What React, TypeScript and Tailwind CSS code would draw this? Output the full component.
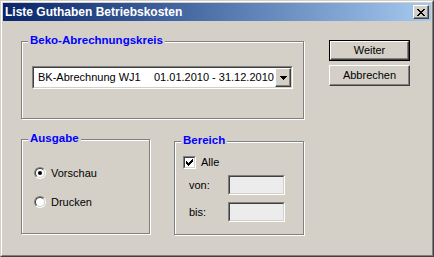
import React from 'react';

const sunken =
  'border border-t-[#808080] border-l-[#808080] border-r-white border-b-white';
const sunkenInner =
  'border border-t-[#404040] border-l-[#404040] border-r-[#d4d0c8] border-b-[#d4d0c8]';
const raised =
  'border border-t-white border-l-white border-r-[#404040] border-b-[#404040] shadow-[inset_-1px_-1px_0_#808080]';

const GroupBox: React.FC<{ label: string; className?: string; children?: React.ReactNode }> = ({
  label,
  className,
  children,
}) => (
  <div
    className={
      'relative border border-[#808080] shadow-[1px_1px_0_#fff,inset_1px_1px_0_#fff] ' + (className ?? '')
    }
  >
    <span className="absolute left-[6px] top-[-9px] px-[2px] bg-[#d4d0c8] text-[#0000ff] font-bold text-[11.5px] leading-[14px]">
      {label}
    </span>
    {children}
  </div>
);

const Radio: React.FC<{ checked?: boolean }> = ({ checked }) => (
  <div className={'w-[12px] h-[12px] rounded-full ' + sunken}>
    <div className={'w-full h-full rounded-full bg-white flex items-center justify-center ' + sunkenInner}>
      {checked && <div className="w-[4px] h-[4px] rounded-full bg-black" />}
    </div>
  </div>
);

const Checkbox: React.FC = () => (
  <div className={'w-[13px] h-[13px] ' + sunken}>
    <div className={'w-full h-full bg-white flex items-center justify-center ' + sunkenInner}>
      <svg width="7" height="7" viewBox="0 0 7 7" shapeRendering="crispEdges">
        <path d="M0 2h1v1h1v1h1v-1h1v-1h1v-1h1v-1h1v3h-1v1h-1v1h-1v1h-1v1h-1v-1h-1v-1h-1z" fill="#000" />
      </svg>
    </div>
  </div>
);

const Field: React.FC = () => (
  <div className={'w-[57px] h-[20px] ' + sunken}>
    <div className={'w-full h-full bg-[#ececec] ' + sunkenInner} />
  </div>
);

export default function App() {
  return (
    <div
      className="w-[434px] h-[257px] bg-[#d4d0c8] border border-t-[#d4d0c8] border-l-[#d4d0c8] border-r-[#404040] border-b-[#404040] text-[11px] text-black"
      style={{ fontFamily: '"Liberation Sans", Arial, sans-serif' }}
    >
      <div className="h-full border border-t-white border-l-white border-r-[#808080] border-b-[#808080] p-px flex flex-col">
        {/* title bar */}
        <div className="h-[18px] flex items-center justify-between pl-[2px] pr-[2px] bg-gradient-to-r from-[#0a246a] to-[#a6caf0]">
          <span className="text-white font-bold text-[12px] leading-none">Liste Guthaben Betriebskosten</span>
          <div className={'w-[16px] h-[14px] bg-[#d4d0c8] flex items-center justify-center ' + raised}>
            <svg width="8" height="7" viewBox="0 0 8 7" shapeRendering="crispEdges">
              <path
                d="M0 0h2v1h1v1h2v-1h1v-1h2v1h-1v1h-1v1h-1v1h1v1h1v1h1v1h-2v-1h-1v-1h-2v1h-1v1h-2v-1h1v-1h1v-1h1v-1h-1v-1h-1v-1h-1z"
                fill="#000"
              />
            </svg>
          </div>
        </div>

        {/* body */}
        <div className="flex pl-[18px]">
          <div className="w-[283px] pt-[20px]">
            <GroupBox label="Beko-Abrechnungskreis" className="h-[78px]">
              <div className={'mt-[24px] ml-[10px] w-[261px] h-[23px] ' + sunken}>
                <div className={'w-full h-full bg-white flex items-center ' + sunkenInner}>
                  <span className="pl-[4px] w-[120px] shrink-0">BK-Abrechnung WJ1</span>
                  <span className="flex-1">01.01.2010 - 31.12.2010</span>
                  <div className={'w-[16px] h-full bg-[#d4d0c8] flex items-center justify-center ' + raised}>
                    <svg width="7" height="4" viewBox="0 0 7 4" shapeRendering="crispEdges">
                      <path d="M0 0h7v1h-1v1h-1v1h-1v1h-1v-1h-1v-1h-1v-1h-1z" fill="#000" />
                    </svg>
                  </div>
                </div>
              </div>
            </GroupBox>

            <div className="flex items-start mt-[20px]">
              <GroupBox label="Ausgabe" className="w-[129px] h-[95px]">
                <div className="mt-[27px] ml-[12px] flex items-center gap-[5px]">
                  <Radio checked />
                  <span className="leading-[12px]">Vorschau</span>
                </div>
                <div className="mt-[17px] ml-[12px] flex items-center gap-[5px]">
                  <Radio />
                  <span className="leading-[12px]">Drucken</span>
                </div>
              </GroupBox>

              <GroupBox label="Bereich" className="ml-[24px] mt-[2px] w-[130px] h-[94px]">
                <div className="mt-[14px] ml-[8px] flex items-center gap-[5px]">
                  <Checkbox />
                  <span className="leading-[13px]">Alle</span>
                </div>
                <div className="mt-[6px] ml-[14px] flex items-center">
                  <span className="w-[39px]">von:</span>
                  <Field />
                </div>
                <div className="mt-[7px] ml-[14px] flex items-center">
                  <span className="w-[39px]">bis:</span>
                  <Field />
                </div>
              </GroupBox>
            </div>
          </div>

          <div className="ml-[25px] pt-[19px] flex flex-col">
            <div className="w-[81px] h-[21px] border border-black">
              <div className={'w-full h-full flex items-center justify-center bg-[#d4d0c8] ' + raised}>
                Weiter
              </div>
            </div>
            <div className={'mt-[4px] w-[81px] h-[21px] flex items-center justify-center bg-[#d4d0c8] ' + raised}>
              Abbrechen
            </div>
          </div>
        </div>
      </div>
    </div>
  );
}
